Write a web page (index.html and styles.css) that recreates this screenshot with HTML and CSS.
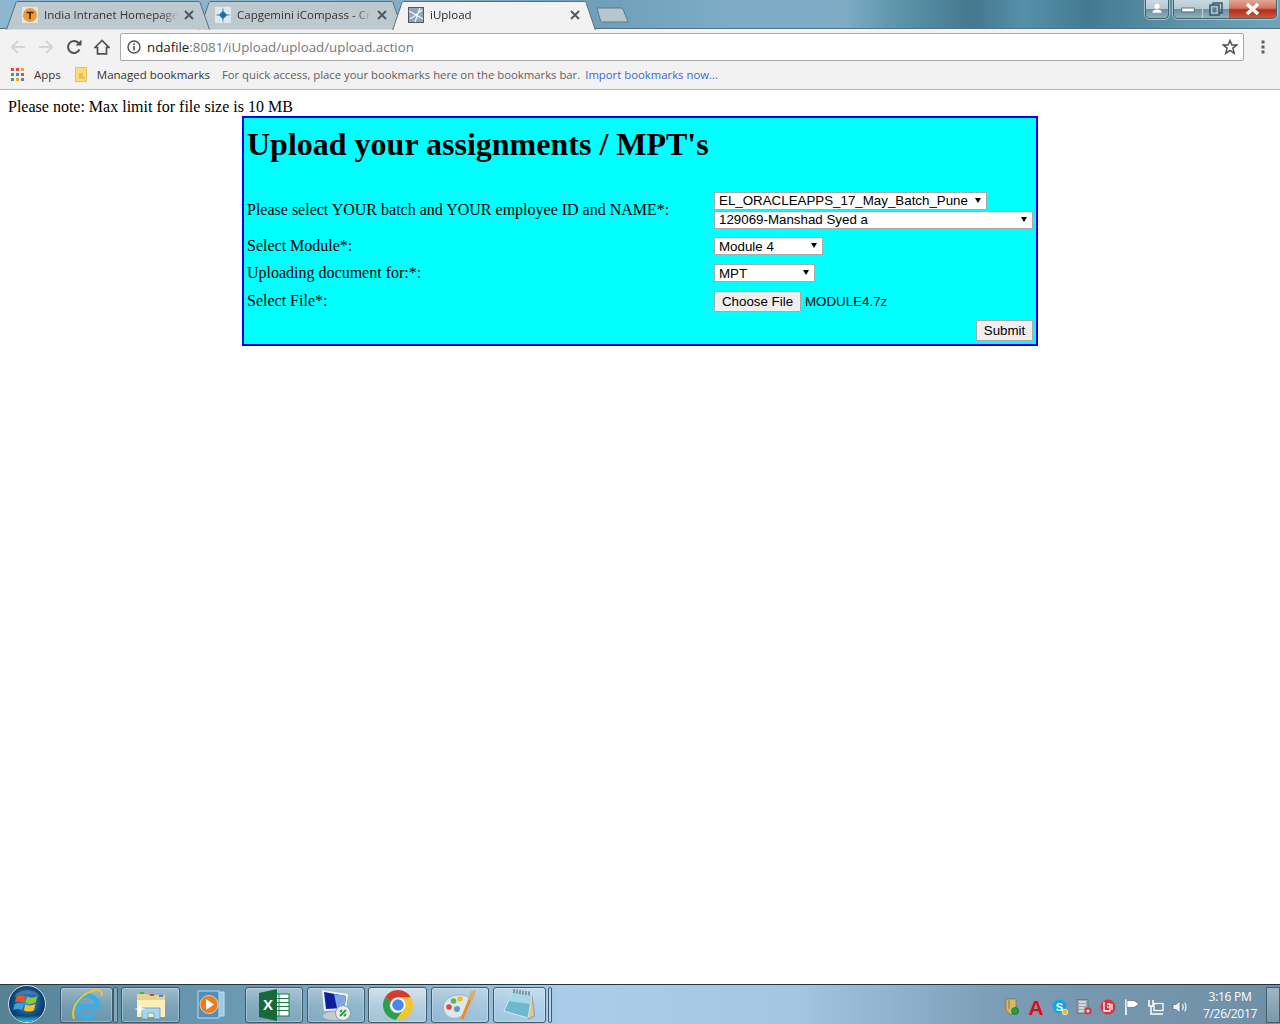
FILE: index.html
```html
<!DOCTYPE html>
<html lang="en">
<head>
<meta charset="utf-8">
<title>iUpload</title>
<link rel="stylesheet" href="styles.css">
</head>
<body>
<header class="browser">
  <div class="strip">
    <div class="tab tab-a">
      <svg class="tab-shape" viewBox="0 0 204 29"><path d="M0.500 29 L10 2 Q10.500 1 12 1 H192 Q193.500 1 194 2 L203.500 29" fill="#bcc9cf" stroke="#56707d"/></svg>
      <svg class="fav" viewBox="0 0 16 16"><rect width="16" height="16" fill="#dfe6ea"/><circle cx="8" cy="8" r="7" fill="#ee9a2c"/><path d="M4.500 5.500H11.500M8 5.500V12" stroke="#3a2a10" stroke-width="1.600" fill="none"/></svg>
      <span class="tab-title">India Intranet Homepage</span>
      <svg class="close" viewBox="0 0 10 10"><path d="M1 1L9 9M9 1L1 9" stroke="#50565a" stroke-width="1.800"/></svg>
    </div>
    <div class="tab tab-b">
      <svg class="tab-shape" viewBox="0 0 204 29"><path d="M0.500 29 L10 2 Q10.500 1 12 1 H192 Q193.500 1 194 2 L203.500 29" fill="#bcc9cf" stroke="#56707d"/></svg>
      <svg class="fav" viewBox="0 0 16 16"><rect width="16" height="16" fill="#dfe8ee"/><path d="M8 0L9.300 6.700L16 8L9.300 9.300L8 16L6.700 9.300L0 8L6.700 6.700Z" fill="#3a8fc4"/><circle cx="8" cy="8" r="3" fill="#1f6d9e"/></svg>
      <span class="tab-title">Capgemini iCompass - Cr</span>
      <svg class="close" viewBox="0 0 10 10"><path d="M1 1L9 9M9 1L1 9" stroke="#50565a" stroke-width="1.800"/></svg>
    </div>
    <div class="tab tab-c">
      <svg class="tab-shape" viewBox="0 0 204 29"><path d="M0.500 30 L10 2 Q10.500 1 12 1 H192 Q193.500 1 194 2 L203.500 30" fill="#f2f2f2" stroke="#56707d"/></svg>
      <svg class="fav" viewBox="0 0 16 16"><rect x="0.500" y="0.500" width="15" height="15" fill="#8fa6b4" stroke="#4b5a64"/><path d="M1 4L15 12M12 1L7 15M2 12L8 8L14 3" stroke="#f4f6f7" stroke-width="1.300" fill="none"/></svg>
      <span class="tab-title tab-title-on">iUpload</span>
      <svg class="close" viewBox="0 0 10 10"><path d="M1 1L9 9M9 1L1 9" stroke="#50565a" stroke-width="1.800"/></svg>
    </div>
    <svg class="newtab" viewBox="0 0 33 16"><path d="M1 1H25Q26 1 27 2L32 15H6Q5 15 4.600 14Z" fill="#b6c6cd" stroke="#5d7a88"/></svg>
    <div class="winbtns">
      <div class="wb wb-user"><svg viewBox="0 0 24 18" class="wb-ico"><circle cx="12" cy="6" r="2.800" fill="#fff"/><path d="M7 13Q7 9.500 12 9.500Q17 9.500 17 13Z" fill="#fff"/></svg></div>
      <div class="wb-group">
        <div class="wb wb-min"><svg viewBox="0 0 29 18" class="wb-ico"><rect x="8" y="8" width="13" height="4" fill="#fff" stroke="#3d5a68" stroke-width="0.800"/></svg></div>
        <div class="wb wb-max"><svg viewBox="0 0 26 18" class="wb-ico"><rect x="10" y="3" width="9" height="10" fill="none" stroke="#33505e" stroke-width="1.400"/><rect x="7" y="5" width="9" height="10" fill="#a9c0cc" stroke="#33505e" stroke-width="1.400"/><rect x="9.500" y="7.500" width="4" height="5" fill="#5c7c8c"/></svg></div>
        <div class="wb wb-close"><svg viewBox="0 0 47 18" class="wb-ico"><path d="M18 4L29 14M29 4L18 14" stroke="#fff" stroke-width="3.600"/></svg></div>
      </div>
    </div>
  </div>
  <div class="toolbar">
    <svg class="tool tool-back" viewBox="0 0 16 16"><path d="M15 8H2M8 2L2 8L8 14" fill="none" stroke="#d4d4d4" stroke-width="2"/></svg>
    <svg class="tool tool-fwd" viewBox="0 0 16 16"><path d="M1 8H14M8 2L14 8L8 14" fill="none" stroke="#d4d4d4" stroke-width="2"/></svg>
    <svg class="tool tool-reload" viewBox="0 0 16 16"><path d="M13.500 10.500A6 6 0 1 1 12.500 4" fill="none" stroke="#505050" stroke-width="2"/><path d="M9.500 6.500H15.500V0.500Z" fill="#505050"/></svg>
    <svg class="tool tool-home" viewBox="0 0 16 16"><path d="M8 1.500L1 8.500H3.500V14.800H12.500V8.500H15Z" fill="none" stroke="#505050" stroke-width="1.700"/></svg>
    <div class="omnibox">
      <svg class="info" viewBox="0 0 14 14"><circle cx="7" cy="7" r="6" fill="none" stroke="#505050" stroke-width="1.400"/><path d="M7 6V10.500M7 3.300V5" stroke="#505050" stroke-width="1.600"/></svg>
      <span class="url"><span class="url-host">ndafile</span>:8081/iUpload/upload/upload.action</span>
      <svg class="star" viewBox="0 0 16 16"><path d="M8 1.500L9.900 6H14.800L10.900 9.100L12.300 14.300L8 11.400L3.700 14.300L5.100 9.100L1.200 6H6.100Z" fill="none" stroke="#505050" stroke-width="1.500"/></svg>
    </div>
    <svg class="dots" viewBox="0 0 4 16"><path d="M0.500 1.500H3.500V4.500H0.500ZM0.500 6.500H3.500V9.500H0.500ZM0.500 11.500H3.500V14.500H0.500Z" fill="#606060"/></svg>
  </div>
  <div class="bookmarks">
    <svg class="apps" viewBox="0 0 13 13"><rect x="0" y="0" width="3" height="3" fill="#e04a3f"/><rect x="5" y="0" width="3" height="3" fill="#e04a3f"/><rect x="10" y="0" width="3" height="3" fill="#f0a818"/><rect x="0" y="5" width="3" height="3" fill="#3aa757"/><rect x="5" y="5" width="3" height="3" fill="#4a80e8"/><rect x="10" y="5" width="3" height="3" fill="#e04a3f"/><rect x="0" y="10" width="3" height="3" fill="#3aa757"/><rect x="5" y="10" width="3" height="3" fill="#f0a818"/><rect x="10" y="10" width="3" height="3" fill="#4a80e8"/></svg>
    <span class="bm bm-apps">Apps</span>
    <svg class="bmfolder" viewBox="0 0 12 15"><path d="M0.500 0.500H11.500V14.500H0.500Z" fill="#fbdc78" stroke="#e6c25a"/><path d="M4 7H8M4 9H8M4 11H10" stroke="#c9a440" stroke-width="1.200"/></svg>
    <span class="bm bm-managed">Managed bookmarks</span>
    <span class="bm-hint">For quick access, place your bookmarks here on the bookmarks bar.</span>
    <span class="bm-import">Import bookmarks now...</span>
  </div>
</header>

<main class="page">
  <p class="note">Please note: Max limit for file size is 10 MB</p>
  <form>
    <table class="upload">
      <colgroup><col class="col-label"><col></colgroup>
      <tr>
        <td colspan="2"><h1>Upload your assignments / MPT's</h1></td>
      </tr>
      <tr class="row-batch">
        <td>Please select YOUR batch and YOUR employee ID and NAME*:</td>
        <td>
          <span class="pick pick-batch"><select><option>EL_ORACLEAPPS_17_May_Batch_Pune</option></select></span>
          <span class="pick pick-emp"><select><option>129069-Manshad Syed a</option></select></span>
        </td>
      </tr>
      <tr class="row-module">
        <td>Select Module*:</td>
        <td><span class="pick pick-module"><select><option>Module 4</option></select></span></td>
      </tr>
      <tr class="row-for">
        <td>Uploading document for:*:</td>
        <td><span class="pick pick-for"><select><option>MPT</option></select></span></td>
      </tr>
      <tr class="row-file">
        <td>Select File*:</td>
        <td><div class="file"><button type="button" class="btn btn-file">Choose File</button><span class="fname">MODULE4.7z</span></div></td>
      </tr>
      <tr class="row-submit">
        <td></td>
        <td><button type="button" class="btn btn-submit">Submit</button></td>
      </tr>
    </table>
  </form>
</main>

<footer class="taskbar">
  <svg class="orb" viewBox="0 0 42 40">
    <defs>
      <radialGradient id="orbg" cx="50%" cy="45%" r="55%"><stop offset="0" stop-color="#3a9ad8"/><stop offset="0.650" stop-color="#0f4f86"/><stop offset="1" stop-color="#0b2f52"/></radialGradient>
      <linearGradient id="orbl" x1="0" y1="0" x2="0" y2="1"><stop offset="0" stop-color="#0a3460"/><stop offset="1" stop-color="#35c6e6"/></linearGradient>
    </defs>
    <circle cx="21" cy="20" r="18.500" fill="url(#orbg)" stroke="#cfe0ea" stroke-width="1"/>
    <path d="M6 30A18 18 0 0 0 36 30Q21 36 6 30Z" fill="url(#orbl)"/>
    <path d="M10.500 12.500Q14.500 10 19.500 12.500L18 18.500Q13.500 16.500 9 18.500Z" fill="#e8532b"/>
    <path d="M21 12.500Q26 15 31.500 12L29.800 18.500Q25 21 19.600 19Z" fill="#8cc63f"/>
    <path d="M8.700 20Q13.500 18 17.700 20L16.300 26Q12 24 7 26Z" fill="#3b9fe0"/>
    <path d="M19.300 20.500Q24 22.500 29.500 20L28 26.500Q22.500 28.500 17.800 26.500Z" fill="#f8bf28"/>
    <path d="M8 13A14 11 0 0 1 34 13Q21 7 8 13Z" fill="#fff" opacity="0.180"/>
  </svg>

  <div class="task task-ie">
    <svg class="ticon" viewBox="0 0 32 32">
      <path d="M6.500 17.500H27A10.800 10.800 0 1 0 24 25" fill="none" stroke="#38aeea" stroke-width="4.600"/>
      <path d="M3 30C-1 18 10 3 26 1C30 1 32 3 30 7" fill="none" stroke="#f1c22d" stroke-width="2"/>
    </svg>
  </div>
  <div class="sep"></div>
  <div class="task task-ex">
    <svg class="ticon" viewBox="0 0 32 32">
      <path d="M2 5H13L14 6H29Q30 6 30 7V27H2Z" fill="#e9d28c"/>
      <rect x="5" y="3" width="4" height="2" fill="#3fb54a"/><rect x="15" y="5" width="4" height="2" fill="#d8402f"/><rect x="24" y="6" width="4" height="2" fill="#3f8ad8"/>
      <path d="M2 11H30V28H2Z" fill="#fdeeb8"/>
      <path d="M7 30V19H25V30H19V24H13V30Z" fill="#a8d8f0" stroke="#5e9cc0" stroke-width="0.800"/>
      <path d="M5 15L7 19L11 20L7 21L5 25L3 21L-1 20L3 19Z" fill="#fff" opacity="0.800"/>
    </svg>
  </div>
  <div class="task-free">
    <svg class="ticon ticon-wmp" viewBox="0 0 28 32">
      <path d="M3 3H26V27H3Z" fill="#9fc7e0" stroke="#c7e0ef"/>
      <path d="M0 2H21V29H0Z" fill="#4f8fc0" stroke="#bcdbef"/>
      <circle cx="11" cy="15.500" r="9" fill="#ef7c1c" stroke="#f9c894" stroke-width="1"/>
      <path d="M8 10L16 15.500L8 21Z" fill="#fff"/>
    </svg>
  </div>
  <div class="task task-xl">
    <svg class="ticon" viewBox="0 0 32 32">
      <rect x="13" y="5" width="18" height="22" fill="#fff" stroke="#1f7a45"/>
      <path d="M14 9.500H31M14 13.500H31M14 17.500H31M14 21.500H31M21 5V27" stroke="#1f7a45"/>
      <path d="M1 4L19 0V32L1 28Z" fill="#17693a"/>
      <text x="10" y="21" class="xl-x">X</text>
    </svg>
  </div>
  <div class="task task-rdp">
    <svg class="ticon" viewBox="0 0 32 32">
      <path d="M2 1L28 5L26 21L4 22Z" fill="#f0f4f8"/>
      <path d="M4 3L26 7L24.500 19L6 20Z" fill="#0d1f9c"/>
      <path d="M14 5L26 7L24.500 19L17 19.500Z" fill="#7fa6e6"/>
      <ellipse cx="14" cy="27" rx="11" ry="4" fill="#c8ccd0"/>
      <circle cx="23" cy="24" r="7.500" fill="#e8ecee" stroke="#8a9aa4"/>
      <path d="M20 27L23 24M23 24L26 21M20 23L22 21M24 27L26 25" stroke="#2d9a3a" stroke-width="1.800"/>
    </svg>
  </div>
  <div class="task task-ch">
    <svg class="ticon" viewBox="0 0 32 32">
      <path d="M16 1A15 15 0 0 1 29 8.500H16A7.500 7.500 0 0 0 9 12.500L3 8.500A15 15 0 0 1 16 1Z" fill="#d93a30"/>
      <path d="M3 8.500A15 15 0 0 0 14 30.900L20 22.500A7.500 7.500 0 0 1 9 12.500Z" fill="#2f9e4a"/>
      <path d="M29 8.500A15 15 0 0 1 14 30.900L20 22.500A7.500 7.500 0 0 0 16 8.500Z" fill="#f5c52c"/>
      <circle cx="16" cy="16" r="7.500" fill="#fff"/><circle cx="16" cy="16" r="5.800" fill="#4a86e8"/>
    </svg>
  </div>
  <div class="task task-pt">
    <svg class="ticon ticon-paint" viewBox="0 0 34 32">
      <path d="M0.500 20C-1 10 10 5 19 6C28 7 30 13 25 17C20 21 23 27 14 29C7 30 2 27 0.500 20Z" fill="#dbe8f1" stroke="#9ab4c4"/>
      <circle cx="6" cy="18" r="2.800" fill="#e0483c"/><circle cx="10.500" cy="12" r="2.800" fill="#5cb84a"/><circle cx="17" cy="10" r="2.800" fill="#f0c030"/><circle cx="14" cy="20" r="3" fill="#6a94b8"/>
      <path d="M19 30L27 10" stroke="#ef8c1e" stroke-width="3"/>
      <path d="M25 10L28 2L33 1L30 12Z" fill="#d2b078"/>
    </svg>
  </div>
  <div class="task task-np">
    <svg class="ticon" viewBox="0 0 32 32">
      <path d="M28 6L30.500 27L24 30L22 20Z" fill="#d8c89c" stroke="#7a7258" stroke-width="0.600"/>
      <path d="M9 2L28 6L24 29L0 22Z" fill="#6fb6cf" stroke="#e6f2f6" stroke-width="0.800"/>
      <path d="M9 2L28 6L26 15L4 12Z" fill="#a5d8e6"/>
      <path d="M10 0V4M13 0.500V4.500M16 1V5M19 1.500V5.500M22 2V6M25 2.500V6.500" stroke="#5a6a6a" stroke-width="1.200"/>
    </svg>
  </div>
  <div class="sep sep-end"></div>
  <div class="tray">
    <svg class="tico" viewBox="0 0 16 16"><path d="M2 0H12V9L7 16L2 11Z" fill="#d9b964" stroke="#7a6a2a" stroke-width="0.600"/><path d="M5 1V10" stroke="#8a7a3a"/><circle cx="11" cy="12" r="3.500" fill="#1fa53a" stroke="#0c5a1c" stroke-width="0.600"/></svg>
    <svg class="tico" viewBox="0 0 16 16"><text x="8" y="16" class="tray-a">A</text></svg>
    <svg class="tico" viewBox="0 0 16 16"><circle cx="7.500" cy="7.500" r="7" fill="#12a5e8"/><text x="7.500" y="11.500" class="tray-s">S</text><circle cx="13" cy="13" r="2.800" fill="#f5b82a" stroke="#fff" stroke-width="0.600"/></svg>
    <svg class="tico" viewBox="0 0 16 16"><rect x="1" y="0.500" width="11" height="14" fill="#9ea6b6" stroke="#6e7684"/><path d="M3 3H10M3 6H10M3 9H8M3 12H8" stroke="#e6e8ee" stroke-width="1.300"/><circle cx="12" cy="12" r="3.500" fill="#c9303a"/><path d="M10 12H14M12 10V14" stroke="#fff"/></svg>
    <svg class="tico" viewBox="0 0 16 16"><circle cx="8" cy="8" r="7.500" fill="#d6343c"/><path d="M4 3V12H10V5H7M7 8H8.500M12 5V11" stroke="#fff" stroke-width="1.300" fill="none"/></svg>
    <svg class="tico" viewBox="0 0 16 16"><path d="M2 0.500V16" stroke="#fff" stroke-width="1.600"/><path d="M3 1.500H10L15 5L10 8.500H3Z" fill="#fff" stroke="#3c4a54" stroke-width="0.500"/></svg>
    <svg class="tico" viewBox="0 0 16 16"><path d="M1 1V7H5V1M3 7V15H15" fill="none" stroke="#fff" stroke-width="1.500"/><rect x="6" y="4.500" width="9" height="7" fill="#6e90a4" stroke="#fff" stroke-width="1.300"/></svg>
    <svg class="tico" viewBox="0 0 16 16"><path d="M1 5.500H4L8 2V14L4 10.500H1Z" fill="#eef2f4" stroke="#3c4a54" stroke-width="0.500"/><path d="M10.500 5Q12 8 10.500 11M12.800 3.500Q15 8 12.800 12.500" fill="none" stroke="#eef2f4" stroke-width="1.200"/></svg>
  </div>
  <div class="clock"><span>3:16 PM</span><span>7/26/2017</span></div>
  <div class="desktop"></div>
</footer>
</body>
</html>
```

FILE: styles.css
```css
* { box-sizing: border-box; }
html, body { margin: 0; height: 1024px; overflow: hidden; background: #fff; }
body { display: flex; flex-direction: column; font-family: "Liberation Serif", serif; font-size: 16px; color: #000; }

.browser { flex: none; height: 90px; display: flex; flex-direction: column; font-family: "Open Sans", "Noto Sans", sans-serif; }

.strip {
  flex: none; height: 29px; display: flex; padding-left: 6px;
  background: linear-gradient(90deg, #8db6cf 0%, #8ab3cc 25%, #6f9fba 47%, #7eacc7 57%, #7fabc5 66%, #5d95ab 70%, #44788f 76%, #5590aa 80%, #447a92 85%, #5c92a8 92%, #6fa5b8 100%);
  border-bottom: 1px solid #56707d;
}
.tab { position: relative; width: 204px; height: 29px; margin-left: -11px; padding: 0 16px; display: flex; align-items: center; gap: 6px; font-size: 11.500px; color: #333; }
.tab-a { margin-left: 0; z-index: 3; }
.tab-b { z-index: 2; }
.tab-c { z-index: 4; }
.tab-shape { position: absolute; left: 0; top: 0; width: 204px; height: 30px; }
.fav { position: relative; flex: none; width: 16px; height: 16px; }
.tab-title { position: relative; flex: 1; min-width: 0; white-space: nowrap; overflow: hidden; -webkit-mask-image: linear-gradient(90deg, #000 88%, transparent 100%); mask-image: linear-gradient(90deg, #000 88%, transparent 100%); }
.tab-title-on { color: #222; }
.close { position: relative; flex: none; width: 10px; height: 10px; }
.newtab { flex: none; width: 33px; height: 16px; margin-top: 7px; }

.winbtns { margin-left: auto; margin-right: 3px; display: flex; gap: 4px; align-items: flex-start; }
.wb-group { display: flex; border: 1px solid #40606e; border-top: 0; border-radius: 0 0 5px 5px; overflow: hidden; box-shadow: 0 0 0 1px rgba(255,255,255,.45); }
.wb { height: 18px; background: linear-gradient(180deg, #c7d8e0 0%, #b6cad4 48%, #6e909f 52%, #8fb0bd 100%); }
.wb-user { width: 24px; border: 1px solid #40606e; border-top: 0; border-radius: 0 0 5px 5px; box-shadow: 0 0 0 1px rgba(255,255,255,.45); height: 19px; }
.wb-min { width: 29px; border-right: 1px solid #c4d4dc; }
.wb-max { width: 26px; }
.wb-close { width: 47px; background: linear-gradient(180deg, #e2a898 0%, #d27560 45%, #b52c18 55%, #cc5a40 100%); }
.wb-ico { display: block; width: 100%; height: 18px; }

.toolbar { flex: none; height: 34px; padding: 2px 0 0 10px; background: #f2f2f2; display: flex; align-items: center; }
.tool { flex: none; width: 16px; height: 16px; }
.tool-fwd { margin-left: 12px; }
.tool-reload { margin-left: 12px; }
.tool-home { margin-left: 12px; }
.omnibox { margin-left: 10px; width: 1124px; height: 28px; background: #fff; border: 1px solid #a9a9a9; border-radius: 2px; display: flex; align-items: center; padding: 0 5px 0 6px; }
.info { flex: none; width: 14px; height: 14px; }
.url { margin-left: 6px; font-size: 13.300px; color: #777; white-space: nowrap; }
.url-host { color: #222; }
.star { flex: none; width: 16px; height: 16px; margin-left: auto; }
.dots { flex: none; width: 4px; height: 16px; margin-left: 17px; }

.bookmarks { flex: 1; background: #f2f2f2; border-bottom: 1px solid #b4b4b4; display: flex; align-items: center; padding: 0 0 4px 11px; font-size: 11.500px; color: #333; white-space: nowrap; }
.apps { flex: none; width: 13px; height: 13px; margin-top: 1px; }
.bm-apps { margin-left: 10px; }
.bmfolder { flex: none; width: 12px; height: 15px; margin-left: 14px; margin-top: 1px; }
.bm-managed { margin-left: 10px; }
.bm-hint { margin-left: 12px; font-size: 11.320px; color: #5f5f5f; }
.bm-import { margin-left: 5px; font-size: 11.340px; color: #3b66d8; }

.page { flex: 1; min-height: 0; padding: 8px; }
.note { margin: 0; }
.upload { width: 796px; margin: 0 auto; border: 2px solid #00f; border-spacing: 2px; background: #0ff; table-layout: fixed; }
.upload td { padding: 1px; }
.col-label { width: 465px; }
h1 { margin: 5px 0 24px; font-size: 32px; }
.row-batch td { height: 40px; }
.row-module td { height: 28px; }
.row-for td { height: 22px; }
.row-file td { height: 29px; padding-top: 2px; }
.row-submit td { height: 25px; vertical-align: bottom; }

.pick { position: relative; display: block; height: 18px; }
.pick::after { content: ""; position: absolute; top: 6px; right: 6px; border: 3.500px solid transparent; border-top: 5px solid #000; border-bottom: 0; pointer-events: none; }
.pick select { display: block; width: 100%; height: 100%; -webkit-appearance: none; appearance: none; margin: 0; padding: 0 0 0 4px; border: 1px solid #a9a9a9; border-radius: 0; background: #fff; color: #000; font: 13.333px "Liberation Sans", Arial, sans-serif; }
.pick-batch { width: 273px; margin-bottom: 1px; }
.pick-emp { width: 319px; }
.pick-module { width: 109px; }
.pick-for { width: 101px; }

.file { display: flex; align-items: center; gap: 4px; }
.btn { display: block; height: 21px; margin: 0; padding: 0; border: 1px solid #a9a9a9; border-radius: 1px; background: #efefef; color: #000; font: 13.333px "Liberation Sans", Arial, sans-serif; }
.btn-file { width: 87px; }
.btn-submit { width: 57px; margin-left: auto; }
.fname { font: 13.333px "Liberation Sans", Arial, sans-serif; }

.taskbar {
  flex: none; height: 40px; display: flex; align-items: stretch; padding: 2px 0 1px 6px; border-top: 1px solid #26343e;
  background: linear-gradient(90deg, #55828f 0%, #5c8aa1 5%, #6b9ab3 19%, #8ab4cf 34%, #a9cdea 44%, #a5c6e2 62%, #7b9db6 78%, #7697ae 86%, #6e8fa5 100%);
}
.orb { flex: none; width: 42px; height: 40px; margin-top: -3px; overflow: visible; }
.task { flex: none; display: flex; align-items: center; justify-content: center; border: 1px solid #3c5a6a; border-radius: 3px; background: linear-gradient(180deg, rgba(255,255,255,.38) 0%, rgba(255,255,255,.16) 50%, rgba(255,255,255,.08) 100%); box-shadow: inset 0 0 0 1px rgba(255,255,255,.28); }
.ticon { width: 32px; height: 32px; overflow: visible; }
.task-ie { width: 53px; margin-left: 12px; }
.sep { flex: none; width: 5px; border: 1px solid #3c5a6a; border-radius: 2px; background: rgba(255,255,255,.22); }
.task-ex { width: 59px; margin-left: 3px; }
.task-free { flex: none; width: 65px; display: flex; align-items: center; justify-content: center; }
.ticon-wmp { width: 28px; margin-right: 2px; }
.task-xl { width: 58px; }
.task-rdp { width: 58px; margin-left: 4px; }
.task-ch { width: 59px; margin-left: 3px; background: linear-gradient(180deg, rgba(255,255,255,.65) 0%, rgba(255,255,255,.4) 50%, rgba(255,255,255,.28) 100%); }
.task-pt { width: 58px; margin-left: 4px; }
.ticon-paint { width: 34px; }
.task-np { width: 53px; margin-left: 4px; }
.sep-end { margin-left: 2px; width: 4px; }
.tray { margin-left: auto; display: flex; align-items: center; gap: 8px; }
.tico { flex: none; width: 16px; height: 16px; margin-top: 4px; overflow: visible; }
.xl-x { font: bold 15px "Liberation Sans", sans-serif; fill: #fff; text-anchor: middle; }
.tray-a { font: bold 21px "Liberation Sans", sans-serif; fill: #e00c12; text-anchor: middle; }
.tray-s { font: bold 11px "Liberation Sans", sans-serif; fill: #fff; text-anchor: middle; }
.clock { flex: none; width: 60px; margin-left: 12px; display: flex; flex-direction: column; align-items: center; justify-content: center; gap: 3px; font: 12px/14px "Open Sans", "Noto Sans", sans-serif; color: #fff; letter-spacing: -0.300px; }
.desktop { flex: none; width: 14px; margin-left: 6px; border: 1px solid #40606e; background: linear-gradient(180deg, #9cb6c4, #7c98a8); }
```
